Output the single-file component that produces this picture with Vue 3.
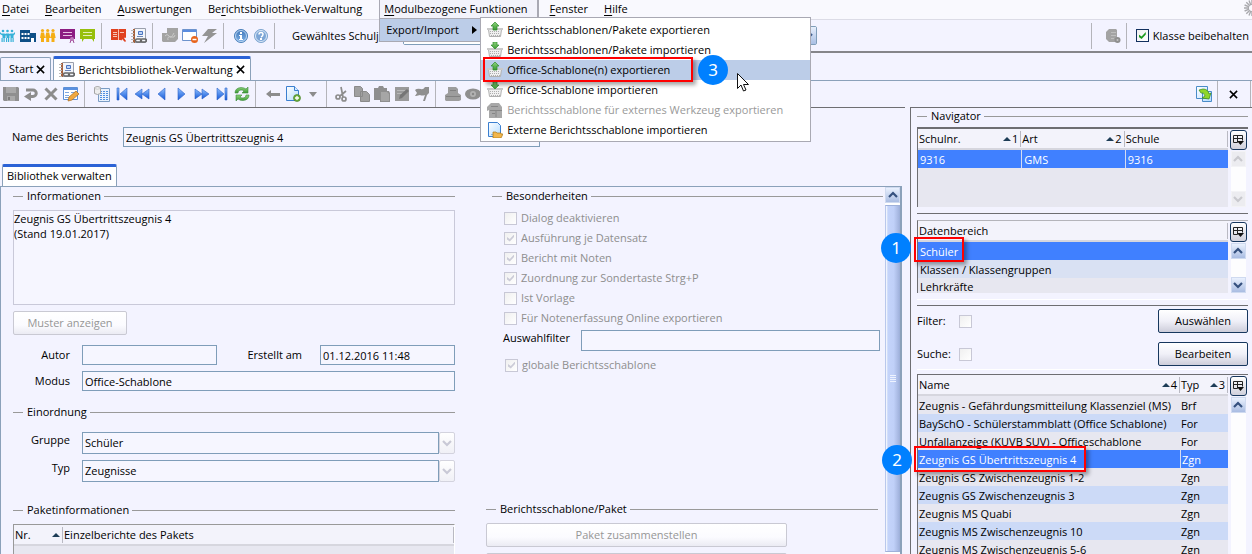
<script setup>
import { ref } from 'vue'

const menus = [
  { key: 'D', rest: 'atei' },
  { key: 'B', rest: 'earbeiten' },
  { key: 'A', rest: 'uswertungen' },
  { pre: 'Be', key: 'r', rest: 'ichtsbibliothek-Verwaltung' },
  { key: 'M', rest: 'odulbezogene Funktionen', open: true },
  { key: 'F', rest: 'enster' },
  { key: 'H', rest: 'ilfe' }
]

const submenu = [
  { icon: 'basket-up', text: 'Berichtsschablonen/Pakete exportieren' },
  { icon: 'basket-down', text: 'Berichtsschablonen/Pakete importieren' },
  { icon: 'basket-up', text: 'Office-Schablone(n) exportieren', active: true },
  { icon: 'basket-down', text: 'Office-Schablone importieren' },
  { icon: 'tool', text: 'Berichtsschablone für externes Werkzeug exportieren', disabled: true },
  { icon: 'doc-folder', text: 'Externe Berichtsschablone importieren' }
]

const mainTools = [
  [['people-cyan', 'Klassen'], ['building', 'Schule'], ['people-yellow', 'Schüler'], ['board-purple', 'Unterricht'], ['board-green', 'Noten']],
  [['book', 'Katalog'], ['notebook', 'Berichte']],
  [['puzzle', 'Module'], ['window-minus', 'Fenster schließen'], ['flash', 'Aktion']],
  [['info', 'Info'], ['help', 'Hilfe']]
]

const editTools = [
  [['save', 'Speichern'], ['undo', 'Rückgängig'], ['cross', 'Löschen'], ['form', 'Bearbeiten']],
  [['list', 'Liste'], ['first', 'Erster'], ['rewind', 'Zurückspulen'], ['prev', 'Vorheriger'], ['next', 'Nächster'], ['forward', 'Vorspulen'], ['last', 'Letzter'], ['refresh', 'Aktualisieren']],
  [['back', 'Zurück'], ['doc-plus', 'Neu'], ['caret', 'Mehr']],
  [['scissors', 'Ausschneiden'], ['copy', 'Kopieren'], ['paste', 'Einfügen'], ['edit', 'Ändern'], ['flag', 'Markieren']],
  [['print', 'Drucken'], ['eye', 'Vorschau']]
]

const options = ref([
  { text: 'Dialog deaktivieren', on: false },
  { text: 'Ausführung je Datensatz', on: true },
  { text: 'Bericht mit Noten', on: true },
  { text: 'Zuordnung zur Sondertaste Strg+P', on: true },
  { text: 'Ist Vorlage', on: false },
  { text: 'Für Notenerfassung Online exportieren', on: false }
])

const reports = [
  ['Zeugnis - Gefährdungsmitteilung Klassenziel (MS)', 'Brf'],
  ['BaySchO - Schülerstammblatt (Office Schablone)', 'For'],
  ['Unfallanzeige (KUVB SUV) - Officeschablone', 'For'],
  ['Zeugnis GS Übertrittszeugnis 4', 'Zgn'],
  ['Zeugnis GS Zwischenzeugnis 1-2', 'Zgn'],
  ['Zeugnis GS Zwischenzeugnis 3', 'Zgn'],
  ['Zeugnis MS Quabi', 'Zgn'],
  ['Zeugnis MS Zwischenzeugnis 10', 'Zgn'],
  ['Zeugnis MS Zwischenzeugnis 5-6', 'Zgn']
]
const selectedReport = 3

const keepClass = ref(true)
const globalTemplate = ref(true)
const filterOn = ref(false)
const searchOn = ref(false)
const name = ref('Zeugnis GS Übertrittszeugnis 4')
const info = ref('Zeugnis GS Übertrittszeugnis 4\n(Stand 19.01.2017)')
const author = ref('')
const created = ref('01.12.2016 11:48')
const mode = ref('Office-Schablone')
const choice = ref('')
</script>

<template>
  <div class="app">
    <svg class="sprite" aria-hidden="true">
      <defs>
        <linearGradient id="g-blue" x1="0" y1="0" x2="0" y2="1"><stop offset="0" stop-color="#8fc0ff" /><stop offset="1" stop-color="#1458d8" /></linearGradient>
        <linearGradient id="g-orb" x1="0" y1="0" x2="0" y2="1"><stop offset="0" stop-color="#3f75b8" /><stop offset="1" stop-color="#7fb2e8" /></linearGradient>
        <linearGradient id="g-doc" x1="0" y1="0" x2="1" y2="1"><stop offset="0" stop-color="#ffffff" /><stop offset="1" stop-color="#b4dcff" /></linearGradient>
        <linearGradient id="g-green" x1="0" y1="0" x2="0" y2="1"><stop offset="0" stop-color="#8fd37c" /><stop offset="1" stop-color="#3a9a32" /></linearGradient>
      </defs>
      <symbol id="people-cyan" viewBox="0 0 16 16"><g fill="#35b1d8"><circle cx="3" cy="3" r="1.300" /><circle cx="7.500" cy="3" r="1.300" /><circle cx="12" cy="3" r="1.300" /><path d="M0 4l1.500 1.500h3L5.300 6 6 5.500h3l.8.500.7-.5h3L15 4v2l-1.500 1.500V10h-3V7.500h-1V10h-3V7.500h-1V10h-3V7.500L0 6zM1.500 10h1.200v4H1.500zM3.500 10h1.200v4H3.500zM6 10h1.200v4H6zM8 10h1.200v4H8zM10.500 10h1.200v4h-1.200zM12.500 10h1.200v4h-1.200z" /></g></symbol>
      <symbol id="building" viewBox="0 0 16 16"><path fill="#0e4f86" d="M0 2h10v3h6v9H0z" /><path fill="#fff" d="M1.500 5h2v2h-2zM4.500 5h2v2h-2zM7.500 5h2v2h-2zM1.500 9h2v2h-2zM4.500 9h2v2h-2zM7.500 9h2v2h-2zM11 10h3v4h-3z" /></symbol>
      <symbol id="people-yellow" viewBox="0 0 16 16"><g fill="#f5ae14"><circle cx="2.500" cy="2.500" r="1.600" /><circle cx="7.700" cy="2.500" r="1.600" /><circle cx="13" cy="2.500" r="1.600" /><path d="M1 4.500h3L5.200 10H4v4H1v-4H0zM6.200 4.500h3l1.200 5.500H9.200v4h-3v-4H5.200zM11.500 4.500h3l1.200 5.500h-1.200v4h-3v-4h-1.200z" /></g></symbol>
      <symbol id="board-purple" viewBox="0 0 16 16"><path fill="#8c1d82" d="M0 1h15v10h-3v2l-2-2H0z" /><path stroke="#e7bfe3" d="M3 4.500h9M3 7.500h9" /><circle cx="12" cy="11" r="2" fill="#c07bba" /><path stroke="#a04c98" d="M11 12l-1 3M13 12l1 3" /></symbol>
      <symbol id="board-green" viewBox="0 0 16 16"><path fill="#97bf0d" d="M0 1h15v10h-1v3l-2-3H4l-2 3v-3H0z" /><path stroke="#e3efb5" d="M3 4.500h9M3 7.500h9" /></symbol>
      <symbol id="book" viewBox="0 0 16 16"><path fill="#e0401f" d="M0 1h7l.5 1L8 1h7v9l-3-2-2-1 1 5H0z" /><path stroke="#f7c3b5" d="M2 4.500h4M2 6.500h4M2 8.500h4M9 4.500h4M7.500 2v10" /><path fill="#e0401f" d="M9 6l6 3-2 1 2 3-1 1-3-3-1 2z" /></symbol>
      <symbol id="notebook" viewBox="0 0 16 16"><path fill="#f3f5fa" stroke="#9a9fac" d="M3.500.5h11v14h-11z" /><path fill="#a5603c" d="M2 1h2v14H2z" /><path stroke="#b8b8b8" d="M0 2.500h3M0 5.500h3M0 8.500h3M0 11.500h3M0 14.500h3" /><path fill="#bcd2f5" stroke="#4a74c0" d="M7.500 3.500h4v3h-4z" /><path stroke="#6f86b5" d="M6 8.500h6" /><path fill="none" stroke="#666" stroke-width="1.400" d="M6 11h3a1.500 1.500 0 010 3H6a1.500 1.500 0 010-3zM11 11h3a1.500 1.500 0 010 3h-3a1.500 1.500 0 010-3z" /></symbol>
      <symbol id="puzzle" viewBox="0 0 16 16"><path fill="#a3a3a3" d="M5 0h11v11l-3 3H1L0 13V5h5z" /><path fill="none" stroke="#c9c9c9" d="M3 8q2-3 4 0t5-3M6 12q-1-4 3-3t4-2" /></symbol>
      <symbol id="window-minus" viewBox="0 0 16 16"><path fill="#fff" stroke="#6d93cd" d="M.5 1.500h14v11H.5z" /><path fill="#5a8ce0" d="M1 2h13v2H1z" /><circle cx="12.500" cy="11.500" r="3.500" fill="#e8641c" /><path stroke="#fff" stroke-width="1.500" d="M10.500 11.500h4" /></symbol>
      <symbol id="flash" viewBox="0 0 16 16"><path fill="#949494" d="M6 1h9l-5 4h5L2 15l4-7H0z" /></symbol>
      <symbol id="info" viewBox="0 0 16 16"><circle cx="8" cy="8" r="6.500" fill="url(#g-orb)" stroke="#4a80bb" /><circle cx="8" cy="8" r="5.500" fill="none" stroke="#b9d4f0" /><path fill="#fff" d="M7 4h2v2H7zM6 7h3v4h1v1H6v-1h1V8H6z" /></symbol>
      <symbol id="help" viewBox="0 0 16 16"><circle cx="8" cy="8" r="6.500" fill="#7da6d6" stroke="#7fa6d0" /><circle cx="8" cy="8" r="5.500" fill="none" stroke="#dbe9f8" /><path fill="none" stroke="#fff" stroke-width="1.500" d="M6 6.500q0-2 2-2t2 1.800T8 9" /><path fill="#fff" d="M7 10h2v2H7z" /></symbol>
      <symbol id="save" viewBox="0 0 16 16"><path fill="#8f8f8f" d="M0 1h15l1 1v13H1l-1-1z" /><path fill="#a9a9a9" d="M3 1h10v6H3zM4 10h8v5H4z" /><path fill="#7d7d7d" d="M5 11h2v3H5z" /></symbol>
      <symbol id="undo" viewBox="0 0 16 16"><path fill="none" stroke="#8c8c8c" stroke-width="3" d="M3 4h7a3 3 0 010 6.500H7" /><path fill="#8c8c8c" d="M8 6v9l-7-4.500z" /></symbol>
      <symbol id="cross" viewBox="0 0 16 16"><path stroke="#8c8c8c" stroke-width="3" d="M2.500 2.500l11 11M13.500 2.500l-11 11" /></symbol>
      <symbol id="form" viewBox="0 0 16 16"><path fill="#fff" stroke="#5d8fd6" d="M.5 1.500h14v12H.5z" /><path fill="#5a90e0" d="M1 2h13v2H1z" /><path stroke="#7ea6e0" d="M2 6.500h4M8 6.500h4M2 9.500h4M2 11.500h4" /><path fill="#f0a840" stroke="#a86c20" stroke-width=".7" d="M5 15l1-4 7-6 3 3-7 6z" /></symbol>
      <symbol id="list" viewBox="0 0 16 16"><path fill="#e9f2fd" stroke="#7b9cc4" d="M4.500 2.500h11v13h-11z" /><path stroke="#4f8fe0" stroke-dasharray="2 1" d="M6 5.500h9M6 7.500h9M6 9.500h9M6 11.500h9M6 13.500h9" /><path fill="#eee" stroke="#a5a5a5" d="M.5 1.500q3-2 6 0v6q-3 2-6 0z" /><ellipse cx="3.500" cy="2" rx="3" ry="1" fill="#fff" stroke="#a5a5a5" stroke-width=".6" /></symbol>
      <symbol id="first" viewBox="0 0 16 16"><path fill="url(#g-blue)" stroke="#2b62c8" stroke-width=".6" d="M3 2h2v12H3zM13 2v12L6 8z" /></symbol>
      <symbol id="rewind" viewBox="0 0 16 16"><path fill="url(#g-blue)" stroke="#2b62c8" stroke-width=".6" d="M8 3v10L1 8zM15 3v10L8 8z" /></symbol>
      <symbol id="prev" viewBox="0 0 16 16"><path fill="url(#g-blue)" stroke="#2b62c8" stroke-width=".6" d="M11 2v12L4 8z" /></symbol>
      <symbol id="next" viewBox="0 0 16 16"><path fill="url(#g-blue)" stroke="#2b62c8" stroke-width=".6" d="M4 2v12l7-6z" /></symbol>
      <symbol id="forward" viewBox="0 0 16 16"><path fill="url(#g-blue)" stroke="#2b62c8" stroke-width=".6" d="M1 3v10l7-5zM8 3v10l7-5z" /></symbol>
      <symbol id="last" viewBox="0 0 16 16"><path fill="url(#g-blue)" stroke="#2b62c8" stroke-width=".6" d="M3 2v12l7-6zM11 2h2v12h-2z" /></symbol>
      <symbol id="refresh" viewBox="0 0 16 16"><g fill="url(#g-green)" stroke="#3c8a3c" stroke-width=".6"><path d="M1 7q0-5 6-5.500 3 0 5 1.500l2-2v6H8l2-2q-1-1-3-1-3 0-3 3z" /><path d="M15 9q0 5-6 5.500-3 0-5-1.500l-2 2V9h6l-2 2q1 1 3 1 3 0 3-3z" /></g></symbol>
      <symbol id="back" viewBox="0 0 16 16"><path fill="#8c8c8c" d="M1 8l5-4v3h9v3H6v2z" /></symbol>
      <symbol id="doc-plus" viewBox="0 0 16 16"><path fill="url(#g-doc)" stroke="#3b7fd0" d="M1.500.5h8l4 4v10h-12z" /><path fill="#d5eaff" stroke="#3b7fd0" d="M9.500.5v4h4" /><circle cx="12" cy="12" r="3.500" fill="#6cae3c" stroke="#3f7a22" stroke-width=".6" /><path stroke="#fff" stroke-width="1.300" d="M10 12h4M12 10v4" /></symbol>
      <symbol id="caret" viewBox="0 0 16 16"><path fill="#8c8c8c" d="M4 6h8l-4 5z" /></symbol>
      <symbol id="scissors" viewBox="0 0 16 16"><g fill="none" stroke="#8c8c8c" stroke-width="1.700"><circle cx="4" cy="11" r="2" /><circle cx="10" cy="13" r="2" /><path d="M6 10l6-5M9 11L7 1" /></g></symbol>
      <symbol id="copy" viewBox="0 0 16 16"><path fill="#a0a0a0" stroke="#8a8a8a" d="M.5.5h6l2 2v8h-8zM6.500 5.500h6l3 3v7h-9z" /></symbol>
      <symbol id="paste" viewBox="0 0 16 16"><path fill="#8f8f8f" d="M0 2h4l1-2h4l1 2h3v3h2l1 2v9H6v-2H0z" /><path fill="#a6a6a6" d="M7 6h6l2 2v7H7z" /></symbol>
      <symbol id="edit" viewBox="0 0 16 16"><path fill="#9a9a9a" d="M1 1h14v14H1z" /><path stroke="#b8b8b8" d="M3 4.500h8M3 7.500h5" /><path fill="#767676" d="M5 13l1-4 7-6 2 2-7 7z" /></symbol>
      <symbol id="flag" viewBox="0 0 16 16"><path fill="#8f8f8f" d="M1 4q2-2 6-1 2 1 4-2h4v6l-2 2-2 6H9l2-6q-3 1-5 0l-4 1H1l2-3z" /></symbol>
      <symbol id="print" viewBox="0 0 16 16"><path fill="#9d9d9d" d="M3 1h8l2 2v4l3 2v5l-2 1H1l-1-1V9l3-2z" /><path stroke="#818181" d="M1 10.500h14M5 4.500h6" /></symbol>
      <symbol id="eye" viewBox="0 0 16 16"><ellipse cx="8" cy="8" rx="8" ry="5.500" fill="#8f8f8f" /><circle cx="8" cy="8" r="3" fill="#b2b2b2" /><circle cx="8" cy="8" r="1.200" fill="#888" /></symbol>
      <symbol id="basket-up" viewBox="0 0 16 16"><path fill="#f0f0f0" stroke="#b0b0b0" d="M1.500 7.500h13l-1 7h-11z" /><path stroke="#adadad" stroke-dasharray="1 1" d="M3 9.500h10M3 11.500h10M4 13.500h9" /><path fill="#cacaca" d="M0 6h16v2H0z" /><path fill="url(#g-green)" stroke="#2f8b2c" stroke-width=".7" d="M8 0l4 4H10v4H6V4H4z" /></symbol>
      <symbol id="basket-down" viewBox="0 0 16 16"><path fill="#f0f0f0" stroke="#b0b0b0" d="M1.500 7.500h13l-1 7h-11z" /><path stroke="#adadad" stroke-dasharray="1 1" d="M3 9.500h10M3 11.500h10M4 13.500h9" /><path fill="#cacaca" d="M0 6h16v2H0z" /><path fill="url(#g-green)" stroke="#2f8b2c" stroke-width=".7" d="M6 0h4v3h2L8 7 4 3h2z" /></symbol>
      <symbol id="tool" viewBox="0 0 16 16"><path fill="#a8a8a8" d="M4 1h8l3 4v11H2V8L0 9V5z" /><path stroke="#868686" d="M4 4.500h7M3 8.500h12M9 8v7M5 11.500h3" /></symbol>
      <symbol id="doc-folder" viewBox="0 0 16 16"><path fill="url(#g-doc)" stroke="#3b7fd0" d="M1.500.5h9l3 3v11h-12z" /><path stroke="#8bb8e8" d="M4 12.500h6" /><path fill="#f2b64c" stroke="#a97818" stroke-width=".7" d="M6 10h3l1 1h4v1h2l-2 4H6z" /></symbol>
      <symbol id="server" viewBox="0 0 16 16"><path fill="#a3a3a3" d="M4 1h7l1 1v12H4l-3-3V4z" /><path stroke="#bdbdbd" d="M6 4.500h5M6 7.500h5M6 10.500h3" /><circle cx="12.500" cy="12" r="3" fill="#8f8f8f" /><circle cx="12.500" cy="12" r="1" fill="#c4c4c4" /></symbol>
      <symbol id="swap" viewBox="0 0 16 16"><path fill="url(#g-doc)" stroke="#4a8cc8" d="M.5.500h11v12H.5zM6.500 5.500h9v10h-9z" /><path fill="#8fd62c" stroke="#3b8a18" stroke-width=".7" d="M3 4l4-1q5 0 6 5l2-1-2 6-7-1 3-2q-1-4-4-3z" /></symbol>
      <symbol id="columns" viewBox="0 0 12 12"><path fill="none" stroke="#222" d="M5.500 8.500h-4v-7h9v5M1.500 4.500h9M5.500 1.500v7" /><path fill="#111" d="M5 7h7l-3.500 4z" /></symbol>
      <symbol id="x-mark" viewBox="0 0 10 10"><path stroke="#000" stroke-width="1.700" d="M1 1l8 8M9 1L1 9" /></symbol>
      <symbol id="chev-up" viewBox="0 0 10 10"><path fill="none" stroke="currentColor" stroke-width="2.200" d="M1 7l4-4 4 4" /></symbol>
      <symbol id="chev-down" viewBox="0 0 10 10"><path fill="none" stroke="currentColor" stroke-width="2.200" d="M1 3l4 4 4-4" /></symbol>
    </svg>

    <header class="menubar">
      <nav>
        <div v-for="m in menus" :key="m.rest" class="menu" :class="{ open: m.open }">
          <button type="button">{{ m.pre }}<u>{{ m.key }}</u>{{ m.rest }}</button>
          <div v-if="m.open" class="drop">
            <button type="button" class="drop-item">Export/Import<i class="tri"></i></button>
            <div class="submenu">
              <button v-for="s in submenu" :key="s.text" type="button" class="sub-item" :class="{ active: s.active }" :disabled="s.disabled">
                <svg class="ic"><use :href="'#' + s.icon" /></svg><span>{{ s.text }}</span>
              </button>
              <i class="frame frame-3"></i>
              <b class="badge badge-3">3</b>
              <svg class="cursor" viewBox="0 0 14 20"><path fill="#fff" stroke="#111" d="M1.500 1.500v15l3.500-3.500 2.500 6 2.500-1-2.500-5.500h5z" /></svg>
            </div>
          </div>
        </div>
      </nav>
      <svg class="spinner" viewBox="0 0 16 16"><path fill="none" stroke="#a9a9ad" stroke-width="1.400" d="M8 0v5M8 11v5M0 8h5M11 8h5M2.300 2.300l3.500 3.500M10.200 10.200l3.500 3.500M2.300 13.700l3.500-3.500M10.200 5.800l3.500-3.500M5 .6l1.900 4.600M.6 5l4.600 1.900M.6 11l4.600-1.900M5 15.400l1.900-4.600" /></svg>
    </header>

    <div class="toolbar main-tools">
      <template v-for="(group, g) in mainTools" :key="g">
        <button v-for="t in group" :key="t[0]" type="button" class="tool" :aria-label="t[1]"><svg class="ic"><use :href="'#' + t[0]" /></svg></button>
        <i class="sep"></i>
      </template>
      <label class="year" for="year">Gewähltes Schulj</label>
      <div class="year-box"><select id="year"><option></option></select><span class="year-arrow"><svg class="chev"><use href="#chev-down" /></svg></span></div>
      <div class="end">
        <i class="sep wide"></i>
        <button type="button" class="tool" aria-label="Server"><svg class="ic"><use href="#server" /></svg></button>
        <i class="sep"></i>
        <label class="check on"><input v-model="keepClass" type="checkbox">Klasse beibehalten</label>
      </div>
    </div>

    <div class="tabs">
      <div class="tab"><span>Start</span><button type="button" aria-label="Start schließen"><svg><use href="#x-mark" /></svg></button></div>
      <div class="tab current"><svg class="ic"><use href="#notebook" /></svg><span>Berichtsbibliothek-Verwaltung</span><button type="button" aria-label="Tab schließen"><svg><use href="#x-mark" /></svg></button></div>
    </div>

    <div class="toolbar edit-tools">
      <template v-for="(group, g) in editTools" :key="g">
        <button v-for="t in group" :key="t[0]" type="button" class="tool" :aria-label="t[1]"><svg class="ic"><use :href="'#' + t[0]" /></svg></button>
        <i v-if="g < 4" class="sep" :class="{ tight: g === 2 }"></i>
      </template>
      <div class="end">
        <button type="button" class="tool" aria-label="Wechseln"><svg class="ic"><use href="#swap" /></svg></button>
        <i class="sep last"></i>
        <button type="button" class="tool close" aria-label="Schließen"><svg><use href="#x-mark" /></svg></button>
        <i class="sep last"></i>
      </div>
    </div>

    <div class="body">
      <main>
        <div class="name-row">
          <label for="name">Name des Berichts</label>
          <input id="name" v-model="name" type="text">
        </div>
        <div class="subtab">Bibliothek verwalten</div>
        <div class="sheet">
          <div class="columns">
            <section>
              <h2>Informationen</h2>
              <textarea v-model="info" class="info" aria-label="Informationen"></textarea>
              <button type="button" class="btn muted sample" disabled>Muster anzeigen</button>
              <div class="grid">
                <label for="author">Autor</label>
                <input id="author" v-model="author" type="text">
                <label for="created" class="mid">Erstellt am</label>
                <input id="created" v-model="created" type="text">
                <label for="mode">Modus</label>
                <input id="mode" v-model="mode" class="span" type="text">
              </div>
              <h2 class="ordering">Einordnung</h2>
              <div class="combo">
                <label for="group">Gruppe</label>
                <select id="group"><option>Schüler</option></select>
                <span class="arrow"><svg class="chev"><use href="#chev-down" /></svg></span>
              </div>
              <div class="combo">
                <label for="type">Typ</label>
                <select id="type"><option>Zeugnisse</option></select>
                <span class="arrow"><svg class="chev"><use href="#chev-down" /></svg></span>
              </div>
              <h2 class="package">Paketinformationen</h2>
              <table class="pack">
                <thead><tr><th class="nr"><div>Nr.<i class="sort"></i></div></th><th><div>Einzelberichte des Pakets</div></th></tr></thead>
                <tbody><tr><td colspan="2"></td></tr></tbody>
              </table>
            </section>
            <section class="right">
              <h2>Besonderheiten</h2>
              <div class="options">
                <label v-for="o in options" :key="o.text" class="check"><input v-model="o.on" type="checkbox" disabled>{{ o.text }}</label>
              </div>
              <div class="choice">
                <label for="choice">Auswahlfilter</label>
                <input id="choice" v-model="choice" type="text">
              </div>
              <label class="check global"><input v-model="globalTemplate" type="checkbox" disabled>globale Berichtsschablone</label>
              <div class="bundle">
                <h2>Berichtsschablone/Paket</h2>
                <button type="button" class="btn muted" disabled>Paket zusammenstellen</button>
                <button type="button" class="btn muted" disabled aria-label="Paket"></button>
              </div>
            </section>
          </div>
          <div class="scroll tall"><span class="knob"><svg class="chev"><use href="#chev-up" /></svg></span><span class="thumb"></span></div>
        </div>
      </main>

      <aside>
        <h2>Navigator</h2>
        <div class="list schools">
          <table>
            <thead><tr>
              <th><div>Schulnr.<span class="order"><i class="sort"></i>1</span></div></th>
              <th><div>Art<span class="order"><i class="sort"></i>2</span></div></th>
              <th><div>Schule</div></th>
            </tr></thead>
            <tbody><tr class="sel"><td>9316</td><td>GMS</td><td>9316</td></tr></tbody>
          </table>
          <div class="side"><button type="button" class="cols" aria-label="Spalten"><svg><use href="#columns" /></svg></button>
            <div class="scroll off"><span class="knob"><svg class="chev"><use href="#chev-up" /></svg></span><span class="track"></span><span class="knob"><svg class="chev"><use href="#chev-down" /></svg></span></div>
          </div>
        </div>

        <div class="rule-box">
          <div class="list areas">
            <table>
              <thead><tr><th><div>Datenbereich</div></th></tr></thead>
              <tbody>
                <tr class="sel"><td>Schüler<i class="frame frame-1"></i><b class="badge badge-1">1</b></td></tr>
                <tr class="tint"><td>Klassen / Klassengruppen</td></tr>
                <tr class="cut"><td>Lehrkräfte</td></tr>
              </tbody>
            </table>
            <div class="side"><button type="button" class="cols" aria-label="Spalten"><svg><use href="#columns" /></svg></button>
              <div class="scroll"><span class="knob"><svg class="chev"><use href="#chev-up" /></svg></span><span class="track"></span><span class="knob"><svg class="chev"><use href="#chev-down" /></svg></span></div>
            </div>
          </div>
        </div>

        <div class="rule-box filters">
          <div class="filter"><label for="filter">Filter:</label><input id="filter" v-model="filterOn" type="checkbox" disabled><button type="button" class="btn">Auswählen</button></div>
          <div class="filter"><label for="search">Suche:</label><input id="search" v-model="searchOn" type="checkbox" disabled><button type="button" class="btn">Bearbeiten</button></div>
        </div>

        <div class="list reports">
          <table>
            <thead><tr>
              <th><div>Name<span class="order"><i class="sort"></i>4</span></div></th>
              <th class="typ"><div>Typ<span class="order"><i class="sort"></i>3</span></div></th>
            </tr></thead>
            <tbody>
              <tr v-for="(r, i) in reports" :key="r[0]" :class="{ sel: i === selectedReport, alt: i % 2 }">
                <td>{{ r[0] }}<template v-if="i === selectedReport"><i class="frame frame-2"></i><b class="badge badge-2">2</b></template></td>
                <td>{{ r[1] }}</td>
              </tr>
            </tbody>
          </table>
          <div class="side"><button type="button" class="cols" aria-label="Spalten"><svg><use href="#columns" /></svg></button>
            <div class="scroll"><span class="knob"><svg class="chev"><use href="#chev-up" /></svg></span><span class="track"></span></div>
          </div>
        </div>
      </aside>
    </div>
  </div>
</template>

<style>
body { background: #f3f3ff; }
</style>

<style scoped>
.app, .app * { box-sizing: border-box; }
.app { height: 100vh; overflow: hidden; display: flex; flex-direction: column; font: 11px/16px "Open Sans", "Noto Sans", sans-serif; color: #000; background: #f3f3ff; }
.app button, .app input, .app select, .app textarea { font: inherit; color: inherit; margin: 0; }
.app button { padding: 0; border: 0; background: none; white-space: nowrap; }
.sprite { position: absolute; width: 0; height: 0; }
.ic { width: 16px; height: 16px; flex: none; display: block; }
.chev { width: 10px; height: 10px; display: block; }
h2 { font-size: inherit; font-weight: 400; line-height: 16px; margin: 0; display: flex; align-items: center; white-space: nowrap; }
h2::before { content: ""; width: 10px; height: 1px; background: #999; margin-right: 4px; }
h2::after { content: ""; flex: 1; height: 1px; background: #999; margin-left: 3px; }

.menubar { height: 20px; flex: none; display: flex; justify-content: space-between; background: #f9f9fe; border-bottom: 1px solid #dcdce6; position: relative; z-index: 3; }
.menubar nav { display: flex; padding-left: 2px; gap: 16px; }
.menu > button { height: 18px; line-height: 18px; display: block; }
.menu u { text-underline-offset: 2px; }
.menu.open { position: relative; margin: 0 6px; }
.menu.open::before { content: ""; position: absolute; left: -5px; right: -11px; top: 0; height: 18px; border: 1px solid #a9a9b3; border-top: 0; border-right-width: 2px; background: #f3f3fb; }
.menu.open > button { position: relative; }
.drop { position: absolute; left: -5px; top: 18px; width: 102px; height: 24px; border: 1px solid #a9a9b3; background: #bccde8; }
.drop-item { width: 100%; height: 22px; display: flex; align-items: center; justify-content: space-between; }
.app .drop-item { padding: 0 3px 0 6px; }
.tri { width: 0; height: 0; border: 4px solid transparent; border-left: 5px solid #000; border-right: 0; }
.submenu { position: absolute; left: 100px; top: -2px; width: 331px; background: #fff; border: 1px solid #a9a9b3; padding: 2px 0 1px; }
.sub-item { display: flex; align-items: center; gap: 4px; width: 100%; height: 20px; }
.app .sub-item { padding: 0 6px; }
.app .sub-item:disabled { color: #999; }
.app .sub-item.active { background: #bccde8; }
.frame { position: absolute; border: 2px solid #f00; box-shadow: 3px 3px 4px rgba(0, 0, 0, .35); pointer-events: none; }
.badge { position: absolute; width: 30px; height: 30px; border-radius: 50%; background: #0080ff; color: #fff; font: 400 17px/30px "Noto Sans", sans-serif; text-align: center; }
.frame-3 { left: 2px; top: 39px; width: 210px; height: 25px; }
.badge-3 { left: 217px; top: 37px; }
.cursor { position: absolute; left: 255px; top: 54px; width: 14px; height: 20px; }
.spinner { width: 16px; height: 16px; margin-right: -8px; }

.toolbar { display: flex; align-items: center; flex: none; }
.tool { width: 20px; height: 20px; display: flex; align-items: center; flex: none; }
.sep { width: 1px; height: 26px; background: #b4b4ba; margin: 0 9px 0 1px; flex: none; }
.sep.tight { margin-right: 7px; }
.sep.last { margin-right: 0; }
.sep.wide { margin-right: 13px; }
.end { margin-left: auto; display: flex; align-items: center; }
.main-tools { height: 33px; border-bottom: 2px solid #85858a; }
.year { margin-left: 8px; white-space: nowrap; }
.year-box { display: flex; margin-left: 24px; height: 19px; width: 414px; border: 1px solid #7f9db9; border-radius: 2px; }
.year-box select { flex: 1; appearance: none; border: 0; background: #fff; min-width: 0; }
.year-arrow, .arrow { width: 15px; display: flex; align-items: center; justify-content: center; color: #3c5a8c; background: linear-gradient(#e6eefc, #a9bfe4); }
.check { display: flex; align-items: center; gap: 4px; white-space: nowrap; }
input[type="checkbox"] { appearance: none; width: 13px; height: 13px; border: 1px solid #c8c8d6; background: linear-gradient(135deg, #f0f0f0, #fff); position: relative; flex: none; }
input[type="checkbox"]:checked::before { content: ""; position: absolute; inset: 2px; background: #ccccd8; clip-path: polygon(0 35%, 40% 65%, 100% 0, 100% 35%, 40% 100%, 0 70%); }
.check.on input { border-color: #12305e; }
.check.on input:checked::before { background: #1c9a1c; }
.check.on { padding-right: 3px; }

.tabs { display: flex; align-items: flex-end; gap: 2px; height: 28px; flex: none; border-bottom: 1px solid #8ba1ba; }
.tab { display: flex; align-items: center; height: 23px; gap: 3px; padding: 0 5px 0 8px; border: 1px solid #8ba1ba; border-bottom: 0; border-radius: 2px 2px 0 0; }
.tab.current { height: 24px; background: #fff; border-top: 3px solid #2b62d6; padding: 0 5px; gap: 3px; }
.tab svg:not(.ic) { width: 9px; height: 9px; display: block; }

.edit-tools { height: 26px; padding-left: 3px; }
.edit-tools .close { width: 31px; justify-content: center; }
.edit-tools .close svg { width: 9px; height: 9px; }
.edit-tools .end { padding-right: 1px; }

.body { flex: 1; min-height: 0; display: flex; gap: 5px; }
main { flex: 1; min-width: 0; display: flex; flex-direction: column; border-top: 1px solid #6e6e72; padding-right: 3px; }
.name-row { display: flex; align-items: center; padding: 19px 0 17px 12px; }
.name-row label { width: 111px; }
input[type="text"], textarea, select { border: 1px solid #7f9db9; border-radius: 0; background: #f6f6ff; outline: 0; min-width: 0; }
.app input[type="text"], .app select { padding: 0 2px; }
.name-row input { width: 417px; height: 20px; }
.subtab { align-self: flex-start; height: 22px; margin-left: 2px; padding: 0 4px; line-height: 18px; background: #fff; border: 1px solid #8ba1ba; border-top: 3px solid #2b62d6; border-bottom: 0; border-radius: 2px 2px 0 0; }
.sheet { flex: 1; min-height: 0; display: flex; border: 1px solid #8ba1ba; border-width: 1px 2px 0 1px; }
.columns { flex: 1; min-width: 0; display: grid; grid-template-columns: 442px 1fr; gap: 37px; padding: 1px 2px 0 12px; overflow: hidden; }
.columns h2 { height: 16px; }
.app .info { display: block; width: 100%; height: 95px; margin-top: 6px; resize: none; line-height: 15px; padding: 0; border-color: #c9c9d9; }
.btn { height: 24px; border-radius: 2px; text-align: center; }
.app .btn { border: 1px solid #17375e; background: linear-gradient(#fff, #f0f0f8 50%, #cdcdda); }
.app .btn.muted { border-color: #c9c9d3; color: #969696; background: linear-gradient(#fff, #fbfbff 60%, #ebebf3); }
.app .sample { width: 114px; margin-top: 6px; display: block; }
.grid { display: grid; grid-template-columns: 57px 135px 1fr 135px; column-gap: 12px; row-gap: 6px; margin-top: 10px; align-items: center; }
.grid label { text-align: right; }
.grid .mid { padding-right: 6px; }
.grid input { height: 20px; width: 100%; }
.grid .span { grid-column: 2 / -1; }
.columns .ordering { margin: 13px 0 12px; }
.combo { display: flex; height: 22px; margin-bottom: 6px; }
.combo label { width: 57px; margin-right: 12px; text-align: right; }
.combo select { flex: 1; appearance: none; }
.combo .arrow { width: 16px; color: #c9c9d6; background: linear-gradient(#fff, #f0f0f6); border: 1px solid #d3d3de; border-radius: 2px; }
.columns .package { margin: 20px 0 6px; }
table { border-collapse: separate; border-spacing: 0; table-layout: fixed; width: 100%; }
th { font-weight: 400; text-align: left; padding: 0; height: 21px; background: #f3f3fb; border-bottom: 2px solid #d6d6de; }
th > div { display: flex; align-items: center; justify-content: space-between; height: 16px; padding: 0 2px 0 1px; border-right: 1px solid #b9b9c2; }
td { padding: 0 2px; height: 18px; line-height: 17px; white-space: nowrap; }
.order { display: flex; align-items: center; gap: 1px; }
.sort { width: 0; height: 0; border: 4px solid transparent; border-bottom: 4px solid #1d3c56; border-top: 0; }
.pack { border: 1px solid #999; border-right-color: #fff; }
.pack .nr { width: 49px; }
.pack td { height: 40px; background: #e7e7f0; }

.options { display: flex; flex-direction: column; gap: 4px; padding: 6px 0 0 12px; }
.options .check, .global { color: #8e8e8e; }
.choice { display: flex; gap: 11px; padding: 4px 3px 0 11px; }
.choice input { flex: 1; height: 21px; }
.columns .global { margin: 6px 0 0 13px; }
.bundle { margin: 128px 5px 0 -6px; display: flex; flex-direction: column; align-items: flex-start; gap: 6px; }
.bundle h2 { width: 100%; }
.bundle .btn { width: 301px; flex: none; }

.scroll { display: flex; flex-direction: column; align-items: center; width: 16px; flex: 1; }
.knob { width: 15px; height: 16px; display: flex; align-items: center; justify-content: center; color: #35507e; background: linear-gradient(#eaf1fe, #a9bce2); border: 1px solid #cfdaf0; flex: none; }
.track { flex: 1; width: 15px; background: #fdfdfe; }
.off .knob { color: #c9c9ce; background: #ececf0; border-color: #f3f3f6; }
.scroll.tall { flex: none; width: 15px; gap: 2px; background: #fff; }
.thumb { flex: 1; width: 15px; margin-bottom: 2px; border: 1px solid #9fb1da; border-left-color: #b9c8ec; background: repeating-linear-gradient(#eef3ff 0 1px, transparent 1px 2px) center / 6px 7px no-repeat, linear-gradient(90deg, #fff, #c4d4fa 15%, #c0d0f8 60%, #a3b4de); }

aside { width: 342px; flex: none; border: 1px solid #6e6e72; border-width: 1px 0 0 1px; padding: 0 4px 0 6px; position: relative; }
aside h2 { margin-bottom: 3px; }
.list { display: flex; border: 1px solid #6e6e72; border-width: 1px 0 0 1px; background: #e7e7f0; }
.list table { flex: 1; width: 100%; min-width: 0; align-self: flex-start; }
.side { width: 20px; display: flex; flex-direction: column; align-items: center; background: #f3f3ff; flex: none; }
.app .cols { width: 17px; height: 20px; margin: 1px 0; border: 1px solid #17375e; border-radius: 3px; background: linear-gradient(#fff, #d0d0dc); display: flex; align-items: center; justify-content: center; flex: none; }
.cols svg { width: 12px; height: 12px; }
.sel td { background: #4080ff; color: #fff; }
.sel td + td { border-left: 1px solid #d5dcf0; }
.schools { height: 80px; margin-bottom: 6px; border-top-width: 2px; }
.rule-box { border-top: 1px solid #6e6e72; border-bottom: 1px solid #fff; padding: 6px 0; margin-bottom: 5px; }
.areas { height: 73px; border-top-color: #b4b4ba; }
.areas td { position: relative; }
.tint td { background: #d9e1f3; }
.cut td { height: 15px; }
.filters { padding: 3px 0; display: flex; flex-direction: column; gap: 9px; margin-bottom: 4px; }
.filter { display: flex; align-items: center; }
.filter label { width: 42px; }
.app .filter .btn { width: 90px; margin-left: auto; }
.reports .typ { width: 48px; }
.reports td { position: relative; padding-left: 1px; }
.alt td { background: #ccdaf7; }
.sel.alt td { background: #4080ff; }
.sel { position: relative; z-index: 2; }
.frame-1 { left: -4px; top: -5px; width: 50px; height: 25px; }
.badge-1 { left: -37px; top: -9px; }
.frame-2 { left: -4px; top: -4px; width: 172px; height: 26px; }
.badge-2 { left: -36px; top: -5px; }
</style>
